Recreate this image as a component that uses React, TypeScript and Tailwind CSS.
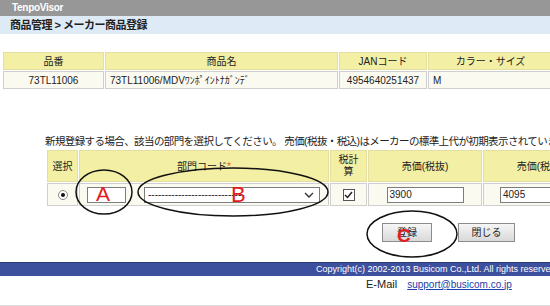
import React from 'react';

const FONT = "font-['Liberation_Sans','Noto_Sans_CJK_JP',sans-serif]";

const th = 'bg-[#f3efa4] border border-[#e4dfa0] font-normal text-center text-[#222] p-0';
const td = 'bg-[#fbfaf1] border border-[#cfcfcf] text-[#222] p-0';

const ProductTable = () => (
  <table className="ml-[2px] w-[547px] table-fixed border-separate border-spacing-[1px] text-[10px]">
    <colgroup>
      <col className="w-[101px]" />
      <col className="w-[233px]" />
      <col className="w-[88px]" />
      <col className="w-[125px]" />
    </colgroup>
    <thead>
      <tr className="h-[18px]">
        <th className={th}>品番</th>
        <th className={th}>商品名</th>
        <th className={th}>JANコード</th>
        <th className={th}>カラー・サイズ</th>
      </tr>
    </thead>
    <tbody>
      <tr className="h-[18px]">
        <td className={`${td} text-center`}>73TL11006</td>
        <td className={`${td} pl-[4px]`}>73TL11006/MDVﾜﾝﾎﾟｲﾝﾄﾅｶﾞﾝﾃﾞ</td>
        <td className={`${td} text-center`}>4954640251437</td>
        <td className={`${td} pl-[4px]`}>M</td>
      </tr>
    </tbody>
  </table>
);

const TextBox = ({ value, className }: { value: string; className: string }) => (
  <div className={`h-[16px] border border-[#7d7d7d] bg-white pl-[2px] text-[10px] leading-[14px] ${className}`}>
    {value}
  </div>
);

const DeptTable = () => (
  <table className="ml-[46px] w-[546px] table-fixed border-separate border-spacing-[1px] text-[10px]">
    <colgroup>
      <col className="w-[31px]" />
      <col className="w-[250px]" />
      <col className="w-[37px]" />
      <col className="w-[114px]" />
      <col className="w-[114px]" />
    </colgroup>
    <thead>
      <tr className="h-[32px]">
        <th className={th}>選択</th>
        <th className={th}>
          部門コード<span className="text-[#e0601c]">*</span>
        </th>
        <th className={`${th} leading-[12px]`}>
          税計
          <br />
          算
        </th>
        <th className={th}>売価(税抜)</th>
        <th className={th}>売価(税込)</th>
      </tr>
    </thead>
    <tbody>
      <tr className="h-[23px]">
        <td className={td}>
          <div className="flex justify-center">
            <span className="flex h-[10px] w-[10px] items-center justify-center rounded-full border border-[#8a8a8a] bg-white">
              <span className="h-[4px] w-[4px] rounded-full bg-[#111]" />
            </span>
          </div>
        </td>
        <td className={td}>
          <div className="flex items-center pl-[7px]">
            <TextBox value="" className="w-[39px]" />
            <div className="ml-[18px] flex h-[16px] w-[176px] items-center justify-between border border-[#7d7d7d] bg-white pl-[3px] pr-[5px] text-[10px]">
              <span>-----------------------------</span>
              <svg width="10" height="6" viewBox="0 0 10 6" fill="none" stroke="#333" strokeWidth="1.4">
                <path d="M1 1l4 4 4-4" />
              </svg>
            </div>
          </div>
        </td>
        <td className={td}>
          <div className="flex justify-center">
            <span className="flex h-[12px] w-[12px] items-center justify-center border border-[#555] bg-white">
              <svg width="9" height="8" viewBox="0 0 9 8" fill="none" stroke="#222" strokeWidth="1.5">
                <path d="M1 4l2.5 2.5L8 1" />
              </svg>
            </span>
          </div>
        </td>
        <td className={td}>
          <div className="flex justify-center">
            <TextBox value="3900" className="w-[77px]" />
          </div>
        </td>
        <td className={td}>
          <div className="flex justify-center">
            <TextBox value="4095" className="w-[80px]" />
          </div>
        </td>
      </tr>
    </tbody>
  </table>
);

const Button = ({ label, className }: { label: string; className: string }) => (
  <button className={`h-[19px] border border-[#8c8c8c] bg-gradient-to-b from-[#f6f6f6] to-[#d9d9d9] text-[10px] text-[#222] ${className}`}>
    {label}
  </button>
);

const Annotations = () => (
  <>
    <svg className="pointer-events-none absolute left-0 top-0" width="550" height="306" fill="none" stroke="#111" strokeWidth="1.5">
      <ellipse cx="104" cy="192" rx="28" ry="22" />
      <ellipse cx="233" cy="192" rx="95" ry="24" />
      <ellipse cx="412" cy="234" rx="45" ry="23" />
    </svg>
    <span className="absolute left-[96px] top-[183px] text-[21px] leading-none text-[#e11d1d]">A</span>
    <span className="absolute left-[231px] top-[184px] text-[22px] leading-none text-[#e11d1d]">B</span>
    <span className="absolute left-[397px] top-[226px] text-[19px] font-bold leading-none text-[#e11d1d]">C</span>
  </>
);

export default function App() {
  return (
    <div className={`relative h-[306px] w-[550px] overflow-hidden bg-white ${FONT}`}>
      <div className="w-[640px]">
        <div className="h-[16px] bg-[#979797] pl-[12px] text-[10px] font-bold leading-[16px] tracking-[-0.3px] text-white">
          TenpoVisor
        </div>
        <div className="h-[18px] bg-[#deeaf6] pl-[10px] text-[11px] font-bold leading-[18px] tracking-[-0.5px] text-[#222]">
          商品管理 &gt; メーカー商品登録
        </div>
        <div className="pt-[17px]">
          <ProductTable />
        </div>
        <p className="mt-[45px] pl-[45px] text-[10.5px] leading-[13px] tracking-[-0.6px] text-[#222]">
          新規登録する場合、該当の部門を選択してください。 売価(税抜・税込)はメーカーの標準上代が初期表示されています。
        </p>
        <div className="pt-[1px]">
          <DeptTable />
        </div>
        <div className="mt-[16px] flex gap-[26px] pl-[382px]">
          <Button label="登録" className="w-[50px]" />
          <Button label="閉じる" className="w-[57px]" />
        </div>
        <div className="mt-[20px] h-[14px] border-t border-[#2c3c78] bg-[#3c509d] pl-[316px] text-[9px] leading-[13px] whitespace-nowrap text-white">
          Copyright(c) 2002-2013 Busicom Co.,Ltd. All rights reserved.
        </div>
        <div className="flex items-center gap-[10px] pl-[366px]">
          <span className="text-[11px] text-[#222]">E-Mail</span>
          <a href="#" className="text-[10px] text-[#1a3fa8] underline">
            support@busicom.co.jp
          </a>
        </div>
        <div className="mt-[12px] border-t border-[#dcdcdc]" />
      </div>
      <Annotations />
    </div>
  );
}
